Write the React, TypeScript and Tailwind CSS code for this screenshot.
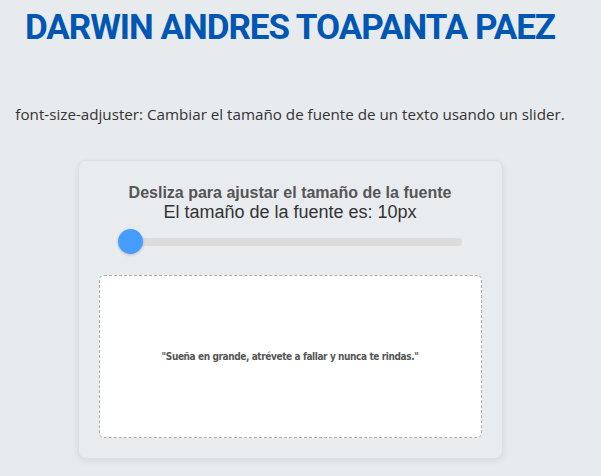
import { useState } from "react";

export default function App() {
  const [size] = useState(10);

  return (
    <div className="min-h-[476px] w-full bg-[#e8ebee]">
      <div className="w-[580px] flex flex-col items-center">
        <h1 className="pt-[9px] whitespace-nowrap text-[35px] leading-[38px] tracking-[-1px] font-bold text-[#0056b3] font-['Roboto',sans-serif]">
          DARWIN ANDRES TOAPANTA PAEZ
        </h1>

        <p className="mt-[56px] whitespace-nowrap text-[15.2px] leading-[22px] text-[#333] font-['Open_Sans',sans-serif]">
          font-size-adjuster: Cambiar el tamaño de fuente de un texto usando un slider.
        </p>

        <div className="mt-[35px] w-[425px] rounded-lg border border-[#dcdfe3] bg-[#e9ecef] px-5 pt-[22px] pb-5 shadow-[0_2px_6px_rgba(0,0,0,0.08)] font-['Liberation_Sans',Arial,sans-serif]">
          <div className="flex flex-col items-center">
            <h2 className="text-[16px] leading-[19px] font-bold text-[#555]">
              Desliza para ajustar el tamaño de la fuente
            </h2>
            <div className="text-[18px] leading-[21px] text-[#333]">
              El tamaño de la fuente es: {size}px
            </div>

            {/* slider */}
            <div className="mt-[6px] w-[90%] h-[25px] flex items-center relative">
              <div className="w-full h-[8px] rounded-full bg-[#dcdcdc]" />
              <div className="absolute left-0 top-0 w-[25px] h-[25px] rounded-full bg-[#479cff] shadow-[0_1px_3px_rgba(0,0,0,0.2)]" />
            </div>
          </div>

          <div className="mt-[21px] h-[163px] rounded-[5px] border border-dashed border-[#aaa] bg-white flex items-center justify-center">
            <p
              className="font-bold text-[#555] tracking-[-0.4px] font-['DejaVu_Sans_Condensed','DejaVu_Sans',sans-serif]"
              style={{ fontSize: size }}
            >
              "Sueña en grande, atrévete a fallar y nunca te rindas."
            </p>
          </div>
        </div>
      </div>
    </div>
  );
}
